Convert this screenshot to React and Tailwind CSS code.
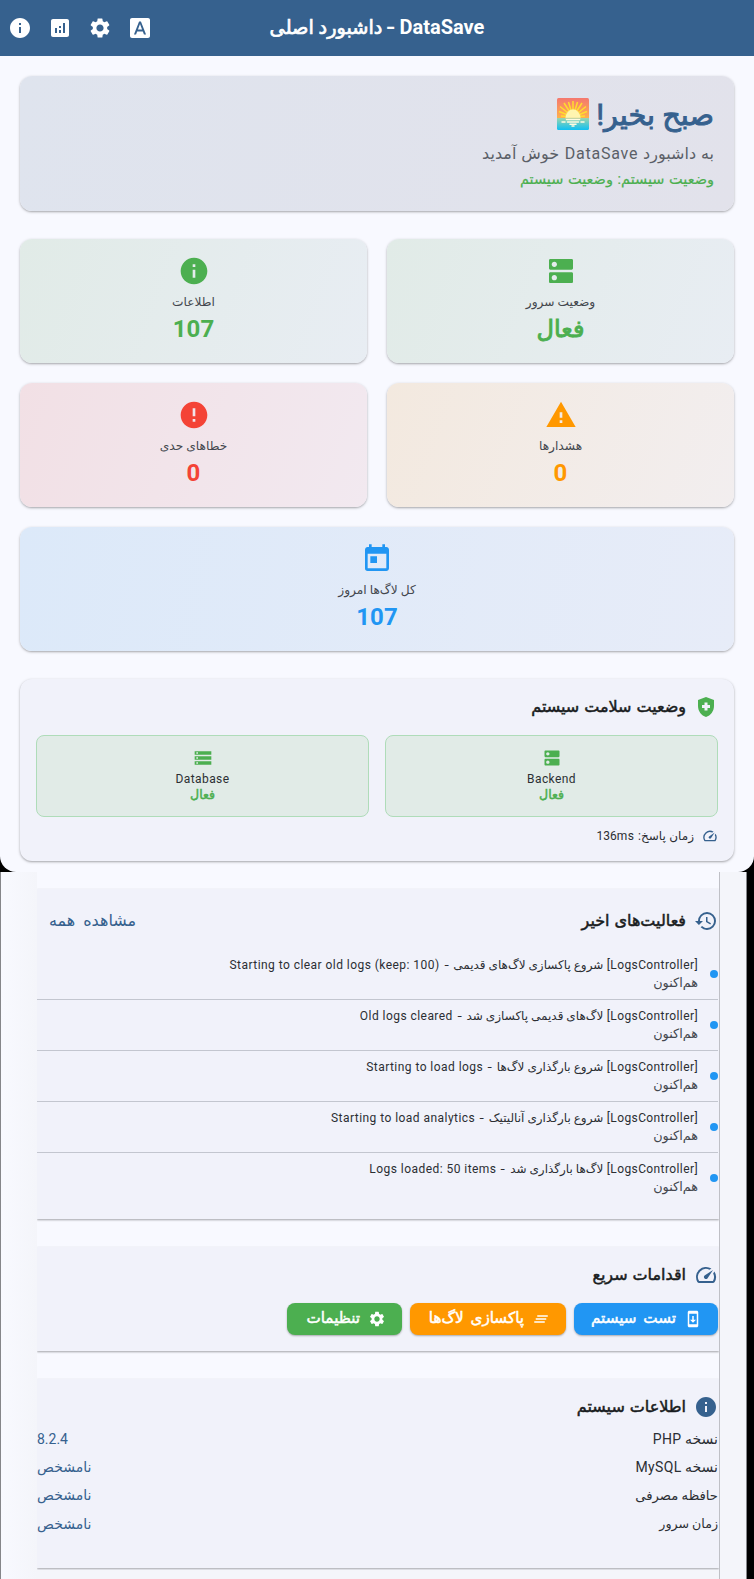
import {
  MdInfo, MdAnalytics, MdSettings, MdFontDownload, MdDns, MdWarning, MdError, MdToday,
  MdStorage, MdHealthAndSafety, MdSpeed, MdHistory, MdSystemUpdate, MdClearAll,
} from "react-icons/md";

const strong = "font-normal [-webkit-text-stroke:0.5px_currentColor]";
const cardShadow = "shadow-[0_1px_2px_rgba(0,0,0,0.26),0_1px_3px_1px_rgba(0,0,0,0.07)]";

function StatCard({ icon: Icon, label, value, arabic, tone, className }) {
  return (
    <div className={`flex h-[124px] flex-col items-center rounded-xl pt-4 ${cardShadow} ${className}`}>
      <Icon className={`size-8 shrink-0 ${tone}`} />
      <div className="mt-1.5 text-[12.2px] leading-[18px] text-[#43474e]">{label}</div>
      {arabic ? (
        <div className={`mt-0.5 text-[24px] leading-8 font-normal [-webkit-text-stroke:0.9px_currentColor] ${tone}`}>{value}</div>
      ) : (
        <div className={`mt-0.5 text-[24px] leading-8 font-bold ${tone}`}>{value}</div>
      )}
    </div>
  );
}

function HealthTile({ icon: Icon, name }) {
  return (
    <div className="flex h-[82px] flex-1 flex-col items-center rounded-lg border border-[#afdcb9] bg-[#e1ebe7] pt-3">
      <Icon className="size-5 text-[#4caf50]" />
      <div className="mt-px text-[12px] leading-[20px] tracking-[0.4px] text-[#2b2f33]">{name}</div>
      <div className="text-[12.5px] leading-[12px] font-normal text-[#4caf50] [-webkit-text-stroke:0.5px_currentColor]">فعال</div>
    </div>
  );
}

function SectionTitle({ icon: Icon, color, children }) {
  return (
    <div className="flex items-center gap-2">
      <Icon className={`size-6 ${color}`} />
      <h2 className={`text-[16px] leading-6 [word-spacing:1px] text-[#191c20] ${strong}`}>{children}</h2>
    </div>
  );
}

const logs = [
  ["شروع پاکسازی لاگ‌های قدیمی", "Starting to clear old logs (keep: 100)"],
  ["لاگ‌های قدیمی پاکسازی شد", "Old logs cleared"],
  ["شروع بارگذاری لاگ‌ها", "Starting to load logs"],
  ["شروع بارگذاری آنالیتیک", "Starting to load analytics"],
  ["لاگ‌ها بارگذاری شد", "Logs loaded: 50 items"],
];

const info = [
  ["نسخه PHP", "8.2.4", "tracking-[0.4px]"],
  ["نسخه MySQL", "نامشخص", "tracking-[0.35px]"],
  ["حافظه مصرفی", "نامشخص", "text-[13.2px]"],
  ["زمان سرور", "نامشخص", "text-[12.6px]"],
];

function LogRow({ text, latin, last }) {
  return (
    <div className={`flex h-[51px] items-center gap-3 ${last ? "pb-px" : "border-b border-[#c3c6cf]"}`}>
      <span className="size-2 shrink-0 rounded-full bg-[#2196f3]" />
      <div className="pb-px tracking-[0.4px]">
        <div className="h-[18px] text-[12px] leading-[18px] whitespace-nowrap text-[#2b2e33]">
          <bdi>[LogsController]</bdi> {text} <span className="inline-block origin-center scale-x-130 px-0.5">-</span> <bdi className="tracking-[0.45px]">{latin}</bdi>
        </div>
        <div className="h-[18px] text-[12.8px] leading-[18px] text-[#43474e]">هم‌اکنون</div>
      </div>
    </div>
  );
}

function ActionButton({ icon: Icon, className, children }) {
  return (
    <button className={`flex h-8 items-center gap-2 rounded-lg pr-4 pb-0.5 text-[15.2px] leading-6 [word-spacing:3px] text-white shadow-[0_1px_2px_rgba(0,0,0,0.3)] ${strong} ${className}`}>
      <Icon className="mt-0.5 size-[18px] shrink-0" />
      <span className="whitespace-nowrap">{children}</span>
    </button>
  );
}

const panel = "bg-[#f1f2fa] shadow-[0_1px_2px_rgba(0,0,0,0.35)]";

export default function App() {
  return (
    <div dir="rtl" className="h-[1579px] w-[754px] overflow-hidden bg-black font-['Roboto','DejaVu_Sans',sans-serif]">
      <div className="h-[872px] overflow-hidden rounded-b-2xl bg-[#f8f9ff]">
        <header className="flex h-14 items-center justify-between bg-[#36618e] text-white">
          <div className="w-40" />
          <h1 className="pb-0.5 text-[19.3px] whitespace-nowrap">
            <bdi className="text-[20px] font-bold">DataSave</bdi>
            <span className="font-bold"> <span className="inline-block scale-x-130">-</span> </span>
            <span className="font-normal [-webkit-text-stroke:0.7px_currentColor]">داشبورد اصلی</span>
          </h1>
          <div className="flex w-40">
            {[MdFontDownload, MdSettings, MdAnalytics, MdInfo].map((Icon, i) => (
              <button key={i} className="flex size-10 items-center justify-center"><Icon className="size-6" /></button>
            ))}
          </div>
        </header>
        <main className="px-5 pt-5">
          <section className={`h-[135px] rounded-xl bg-linear-[101deg] from-[#dfe4ee] to-[#e2e2eb] px-5 pt-5 ${cardShadow}`}>
            <div className="flex h-9 items-center gap-2 text-[28.8px] text-[#36618e]">
              <span className="pt-1 font-normal [-webkit-text-stroke:1px_currentColor]">صبح بخیر!</span>
              <svg viewBox="0 0 32 32" className="size-8">
                <defs>
                  <linearGradient id="sky" x1="0" y1="0" x2="0" y2="1"><stop offset="0" stopColor="#f4786f" /><stop offset="1" stopColor="#ffb04d" /></linearGradient>
                  <linearGradient id="sea" x1="0" y1="0" x2="0" y2="1"><stop offset="0" stopColor="#9bd5ae" /><stop offset="1" stopColor="#0fc0f2" /></linearGradient>
                  <clipPath id="tile"><rect width="32" height="32" rx="1.5" /></clipPath>
                </defs>
                <g clipPath="url(#tile)">
                  <rect width="32" height="20" fill="url(#sky)" />
                  <path stroke="#ffdc2e" strokeWidth="1.5" d="M16 19V3M16 19L11.5 4M16 19L20.5 4M16 19L7 5M16 19L25 5M16 19L3 8.5M16 19L29 8.5M16 19L2 13.5M16 19L30 13.5M16 19L4 18M16 19L28 18" />
                  <rect y="20" width="32" height="12" fill="url(#sea)" />
                  <circle cx="16" cy="19" r="8" fill="#ffe36b" opacity=".5" clipPath="inset(0 0 7px 0)" />
                  <path d="M8.7 20a7.3 8.5 0 0 1 14.6 0z" fill="#fff5b0" />
                  <g stroke="#fffbe0" strokeWidth="1.5" strokeLinecap="round"><path d="M9.5 21.5h13M10.5 24h11M13 26.2h6M15 28h2M5 24h3M24 24h3" /></g>
                  <path stroke="#d8cf94" strokeWidth=".8" d="M8 20.2h16" />
                </g>
              </svg>
            </div>
            <div className="mt-2 text-[16px] leading-7 tracking-[0.75px] [word-spacing:1px] text-[#5b5f67]">به داشبورد DataSave خوش آمدید</div>
            <div className="text-[14.5px] leading-6 [word-spacing:1px] text-[#4caf50] [-webkit-text-stroke:0.2px_currentColor]">وضعیت سیستم: وضعیت سیستم</div>
          </section>

          <section className="mt-7 grid grid-cols-2 gap-5">
            <StatCard icon={MdDns} label="وضعیت سرور" value="فعال" arabic tone="text-[#4caf50]" className="bg-linear-[110deg] from-[#e1ebe7] to-[#e8edf3]" />
            <StatCard icon={MdInfo} label="اطلاعات" value="107" tone="text-[#4caf50]" className="bg-linear-[110deg] from-[#e1ebe7] to-[#e8edf3]" />
            <StatCard icon={MdWarning} label="هشدارها" value="0" tone="text-[#ff9800]" className="bg-linear-[110deg] from-[#f3e9df] to-[#f2eeef]" />
            <StatCard icon={MdError} label="خطاهای حدی" value="0" tone="text-[#f44336]" className="bg-linear-[110deg] from-[#f2e0e5] to-[#f2e9f0]" />
            <StatCard icon={MdToday} label="کل لاگ‌ها امروز" value="107" tone="text-[#2196f3]" className="col-span-2 bg-linear-[100deg] from-[#dce9f9] to-[#e7ecf8]" />
          </section>

          <section className={`mt-7 h-[182px] rounded-xl bg-[#f1f2fa] px-4 pt-4 ${cardShadow}`}>
            <SectionTitle icon={MdHealthAndSafety} color="text-[#4caf50]">وضعیت سلامت سیستم</SectionTitle>
            <div className="mt-4 flex gap-4">
              <HealthTile icon={MdDns} name="Backend" />
              <HealthTile icon={MdStorage} name="Database" />
            </div>
            <div className="mt-[11px] flex items-center gap-2 text-[12px] leading-4 tracking-[0.6px] [word-spacing:0.5px] text-[#2b2e33]">
              <MdSpeed className="size-4 text-[#36618e]" />
              <span>زمان پاسخ: <bdi>136ms</bdi></span>
            </div>
          </section>
        </main>
      </div>

      <div className="flex h-[707px]">
        <div className="w-[7px] bg-black" />
        <div className="w-[28px] border-r border-l border-r-[#85868a] border-l-[#bfc0c6] bg-[#f4f5fa]" />
        <div className="w-[682px] overflow-hidden bg-[#f8f9ff] pt-[17px]">
          <section className={`h-[330px] pt-5 pr-px ${panel}`}>
            <div className="flex items-center justify-between pl-3">
              <SectionTitle icon={MdHistory} color="text-[#36618e]">فعالیت‌های اخیر</SectionTitle>
              <a className="text-[16px] leading-5 font-normal [word-spacing:4px] text-[#36618e]">مشاهده همه</a>
            </div>
            <div className="mt-4">
              {logs.map(([text, latin], i) => <LogRow key={i} text={text} latin={latin} last={i === 4} />)}
            </div>
          </section>
          <section className={`mt-7 h-[104px] pt-4 pr-px ${panel}`}>
            <SectionTitle icon={MdSpeed} color="text-[#36618e]">اقدامات سریع</SectionTitle>
            <div className="mt-4 flex gap-2">
              <ActionButton icon={MdSystemUpdate} className="w-36 bg-[#2196f3]">تست سیستم</ActionButton>
              <ActionButton icon={MdClearAll} className="w-[156px] bg-[#ff9800]">پاکسازی لاگ‌ها</ActionButton>
              <ActionButton icon={MdSettings} className="w-[115px] bg-[#4caf50]">تنظیمات</ActionButton>
            </div>
          </section>
          <section className={`mt-7 h-[189px] pt-4 pr-px ${panel}`}>
            <SectionTitle icon={MdInfo} color="text-[#36618e]">اطلاعات سیستم</SectionTitle>
            <div className="mt-1.5">
              {info.map(([k, v, fit], i) => (
                <div key={i} className="flex h-[28.3px] items-center justify-between text-[14px]">
                  <span className={`text-[#2b2e33] ${fit}`}>{k}</span>
                  <span className="text-[#36618e]">{v}</span>
                </div>
              ))}
            </div>
          </section>
          <div className="mt-0.5 h-3 bg-[#f4f5fa]" />
        </div>
        <div className="flex-1 border-l border-[#85868a] bg-linear-to-r from-[#f8f9ff] to-[#f4f5fa]" />
      </div>
    </div>
  );
}
